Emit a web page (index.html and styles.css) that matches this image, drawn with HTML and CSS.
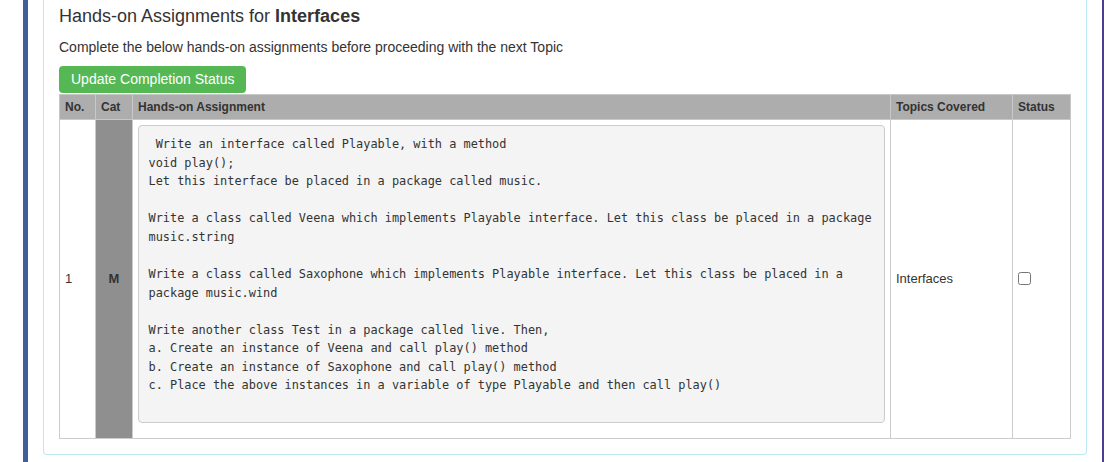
FILE: index.html
```html
<!DOCTYPE html>
<html lang="en">
<head>
<meta charset="utf-8">
<title>Hands-on Assignments</title>
<link rel="stylesheet" href="styles.css">
</head>
<body>
<div class="page">
  <div class="side-bar"></div>
  <div class="panel">
    <div class="panel-body">
      <h4 class="title">Hands-on Assignments for <b>Interfaces</b></h4>
      <p class="lead-text">Complete the below hands-on assignments before proceeding with the next Topic</p>
      <button class="btn-success" type="button">Update Completion Status</button>
      <table class="assign-table">
        <colgroup>
          <col class="c-no">
          <col class="c-cat">
          <col class="c-task">
          <col class="c-topics">
          <col class="c-status">
        </colgroup>
        <thead>
          <tr>
            <th>No.</th>
            <th>Cat</th>
            <th>Hands-on Assignment</th>
            <th>Topics Covered</th>
            <th>Status</th>
          </tr>
        </thead>
        <tbody>
          <tr>
            <td class="num">1</td>
            <td class="cat">M</td>
            <td class="task"><pre class="code"> Write an interface called Playable, with a method
void play();
Let this interface be placed in a package called music.

Write a class called Veena which implements Playable interface. Let this class be placed in a package
music.string

Write a class called Saxophone which implements Playable interface. Let this class be placed in a
package music.wind

Write another class Test in a package called live. Then,
a. Create an instance of Veena and call play() method
b. Create an instance of Saxophone and call play() method
c. Place the above instances in a variable of type Playable and then call play()
 </pre></td>
            <td class="topics">Interfaces</td>
            <td class="status"><input type="checkbox" class="chk"></td>
          </tr>
        </tbody>
      </table>
    </div>
  </div>
  <div class="edge-line"></div>
</div>
</body>
</html>
```

FILE: styles.css
```css
* {
  box-sizing: border-box;
}

html, body {
  margin: 0;
  padding: 0;
  background: #ffffff;
}

body {
  font-family: "Liberation Sans", Arial, sans-serif;
  font-size: 13px;
  line-height: 1.42857;
  color: #333333;
}

.page {
  display: flex;
  align-items: stretch;
  height: 462px;
  overflow: hidden;
}

.side-bar {
  flex: none;
  width: 5px;
  margin-left: 23px;
  background: #3f5e9a;
}

.panel {
  flex: none;
  align-self: flex-start;
  width: 1044px;
  margin-left: 15px;
  border: 1px solid #bce8f1;
  border-top: none;
  border-radius: 0 0 4px 4px;
  background: #ffffff;
}

.panel-body {
  padding: 7px 15px 15px;
}

.title {
  margin: 0 0 10px;
  font-size: 18px;
  font-weight: normal;
  line-height: 1.1;
  color: #333333;
}

.title b {
  font-weight: bold;
}

.lead-text {
  margin: 0 0 9px;
  font-size: 14px;
  line-height: 20px;
}

.btn-success {
  display: block;
  height: 27px;
  margin: 0;
  padding: 0 12px;
  border: none;
  border-radius: 4px;
  background: #55b855;
  color: #ffffff;
  font-family: "Liberation Sans", Arial, sans-serif;
  font-size: 14px;
  line-height: 27px;
  cursor: pointer;
}

.assign-table {
  width: 100%;
  margin-top: 1px;
  border-collapse: collapse;
  table-layout: fixed;
  border: 1px solid #cccccc;
}

.c-no { width: 36px; }
.c-cat { width: 37px; }
.c-topics { width: 122px; }
.c-status { width: 58px; }

.assign-table th {
  padding: 4px 5px;
  background: #adadad;
  border: 1px solid #c8c8c8;
  font-size: 12px;
  font-weight: bold;
  line-height: 16px;
  text-align: left;
  color: #333333;
  white-space: nowrap;
}

.assign-table td {
  padding: 5px;
  border: 1px solid #cccccc;
  vertical-align: middle;
  font-size: 13px;
}

.assign-table td.cat {
  background: #8f8f8f;
  text-align: center;
  font-weight: bold;
}

.code {
  margin: 0 0 10px;
  padding: 9.5px 9.5px 8.5px;
  background: #f4f4f4;
  border: 1px solid #cccccc;
  border-radius: 4px;
  font-family: "DejaVu Sans Mono", "Liberation Mono", monospace;
  font-size: 11.9px;
  line-height: 18.55px;
  color: #333333;
  white-space: pre;
  overflow: hidden;
}

.chk {
  display: block;
  width: 13px;
  height: 13px;
  margin: 0;
}

.edge-line {
  flex: none;
  width: 2px;
  margin-left: 15px;
  background: #4d3d92;
}
```
